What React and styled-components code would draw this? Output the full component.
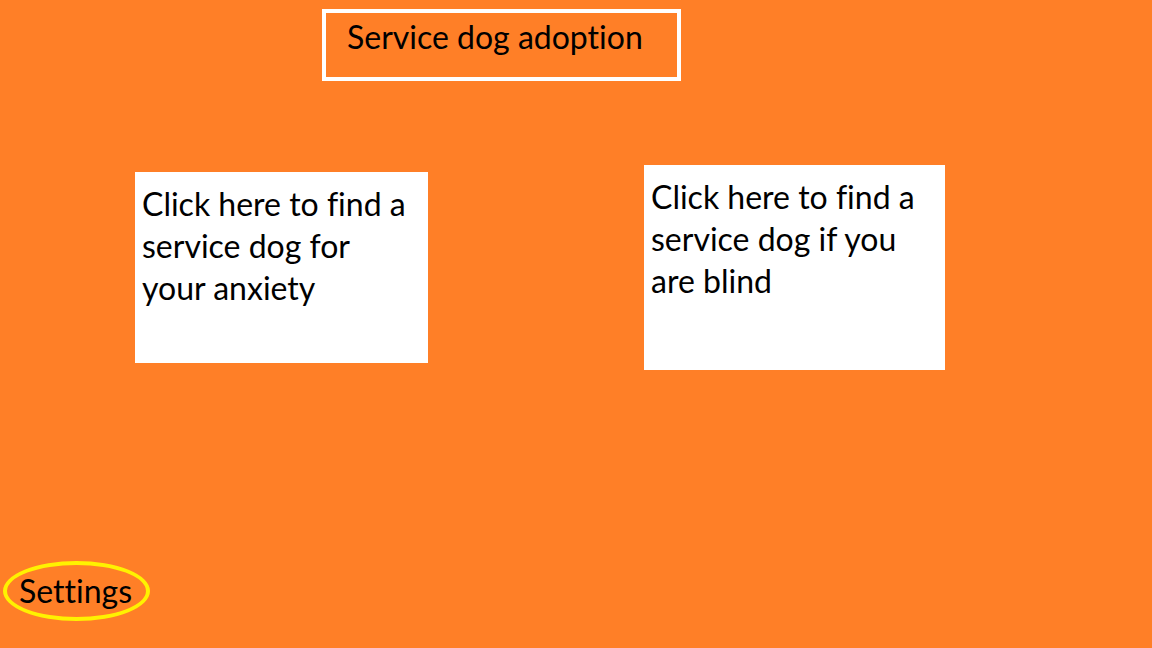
import React from 'react'
import styled, { createGlobalStyle } from 'styled-components'

const GlobalStyle = createGlobalStyle`
    html, body {
        margin:0;
        padding:0;
        background:#ff7f27;
    }
    body {
        font-family:Lato, "Open Sans", sans-serif;
        font-variant-ligatures:none;
        color:#000;
    }
`;

const Page = styled.div`
    width:1152px;
    height:648px;
    background:#ff7f27;
    display:flex;
    flex-direction:column;
    overflow:hidden;
`;

const Header = styled.div`
    padding-top:9px;
    padding-left:322px;
    display:flex;
`;

const TitleBox = styled.div`
    width:359px;
    height:72px;
    box-sizing:border-box;
    border:4px solid #fff;
    padding-left:21px;
    padding-top:4px;
    font-size:32px;
    line-height:40px;
`;

const Cards = styled.div`
    display:flex;
    align-items:flex-start;
    padding-left:135px;
    gap:216px;
`;

const Card = styled.div`
    width:${p => p.w}px;
    height:${p => p.h}px;
    margin-top:${p => p.top}px;
    background:#fff;
    padding:11px ${p => p.w - 277}px 0 7px;
    box-sizing:border-box;
    font-size:32px;
    line-height:42px;
    cursor:pointer;
`;

const Bottom = styled.div`
    margin-top:auto;
    padding:0 0 27px 3px;
    display:flex;
`;

const SettingsButton = styled.div`
    width:147px;
    height:60px;
    box-sizing:border-box;
    border:4px solid #fff200;
    border-radius:50%;
    display:flex;
    align-items:center;
    justify-content:center;
    font-size:32px;
    padding-right:2px;
    padding-bottom:2px;
    cursor:pointer;
`;

const App = () => {
  return (
    <Page>
        <GlobalStyle/>
        <Header>
            <TitleBox>Service dog adoption</TitleBox>
        </Header>
        <Cards>
            <Card w={293} h={191} top={91}>Click here to find a service dog for your anxiety</Card>
            <Card w={301} h={205} top={84}>Click here to find a service dog if you are blind</Card>
        </Cards>
        <Bottom>
            <SettingsButton>Settings</SettingsButton>
        </Bottom>
    </Page>
  )
}

export default App
